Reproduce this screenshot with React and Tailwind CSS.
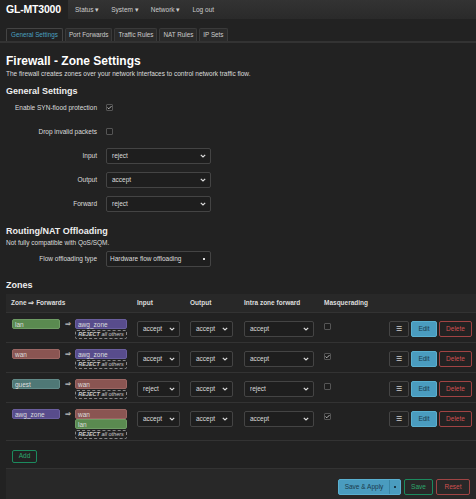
import React from 'react';

const font = { fontFamily: '"Liberation Sans", Arial, sans-serif' };

const zoneColors = {
  lan: 'bg-[#5a8a50] border-[#6e9c64]',
  wan: 'bg-[#8a5552] border-[#9c6764]',
  guest: 'bg-[#4f7876] border-[#628a88]',
  awg_zone: 'bg-[#584c8c] border-[#6a5e9e]',
};

const Chevron = () => (
  <svg width="6" height="4" viewBox="0 0 6 4" className="text-[#ddd]">
    <path d="M0.8 0.8 L3 3 L5.2 0.8" fill="none" stroke="currentColor" strokeWidth="1.2" />
  </svg>
);

function Select({ value, className = '' }) {
  return (
    <div className={`flex h-[16px] items-center justify-between rounded-[2px] border border-[#444] bg-[#1e1e1e] pl-[5px] pr-[4px] text-[6.5px] text-[#ddd] ${className}`}>
      <span>{value}</span>
      <Chevron />
    </div>
  );
}

function Check({ on }) {
  return (
    <div className="flex h-[7px] w-[7px] items-center justify-center rounded-[1px] border border-[#555] bg-[#1e1e1e]">
      {on && (
        <svg width="6" height="5" viewBox="0 0 6 5">
          <path d="M0.6 2.6 L2.2 4 L5.4 0.8" fill="none" stroke="#ddd" strokeWidth="1" />
        </svg>
      )}
    </div>
  );
}

function Badge({ zone, w = 'w-[48px]' }) {
  return (
    <div className={`h-[10px] ${w} rounded-[2px] border px-[2px] text-[6.5px] leading-[9px] text-[#ddd] ${zoneColors[zone]}`}>
      {zone}
    </div>
  );
}

function FormRow({ label, children }) {
  return (
    <div className="flex h-[24px] items-center">
      <div className="w-[91px] text-right text-[6.5px] text-[#ddd]">{label}</div>
      <div className="ml-[9px]">{children}</div>
    </div>
  );
}

const zones = [
  { name: 'lan', fwd: ['awg_zone'], input: 'accept', output: 'accept', intra: 'accept', masq: false, h: 'h-[30px]' },
  { name: 'wan', fwd: ['awg_zone'], input: 'accept', output: 'accept', intra: 'accept', masq: true, h: 'h-[30px]' },
  { name: 'guest', fwd: ['wan'], input: 'reject', output: 'accept', intra: 'reject', masq: false, h: 'h-[30px]' },
  { name: 'awg_zone', fwd: ['wan', 'lan'], input: 'accept', output: 'accept', intra: 'accept', masq: true, h: 'h-[38px]' },
];

export default function App() {
  return (
    <div className="h-[499px] w-[476px] overflow-hidden bg-[#222] text-[#ddd]" style={font}>
      {/* Top bar */}
      <div className="flex h-[19px] bg-gradient-to-b from-[#333] to-[#2a2a2a]">
        <div className="flex w-[68px] items-center whitespace-nowrap bg-[#222] pl-[6px] text-[10.5px] font-bold tracking-[-0.2px] text-white">GL-MT3000</div>
        <div className="flex items-center gap-[12px] pl-[7px] text-[6.5px] text-[#ccc]">
          <span>Status ▾</span>
          <span>System ▾</span>
          <span>Network ▾</span>
          <span>Log out</span>
        </div>
      </div>

      {/* Tabs */}
      <div className="mt-[9px] flex gap-[2px] border-b-[2px] border-[#333] pl-[6px] text-[6.3px]">
        {['General Settings', 'Port Forwards', 'Traffic Rules', 'NAT Rules', 'IP Sets'].map((t, i) => (
          <div
            key={t}
            className={`flex h-[13px] items-center rounded-t-[2px] border border-b-0 px-[3px] ${
              i === 0 ? 'border-[#444] bg-[#222] px-[4px] text-[#4aa0c0]' : 'border-[#3a3a3a] bg-[#2a2a2a] text-[#ccc]'
            }`}
          >
            {t}
          </div>
        ))}
      </div>

      <div className="px-[6px]">
        <h1 className="mt-[11px] text-[12px] font-bold leading-[14px] text-white">Firewall - Zone Settings</h1>
        <p className="mt-[1px] text-[6.5px] text-[#ddd]">The firewall creates zones over your network interfaces to control network traffic flow.</p>

        <h2 className="mt-[7px] text-[9px] font-bold leading-[11px] text-[#eee]">General Settings</h2>
        <div className="mt-[-1px]">
          <FormRow label="Enable SYN-flood protection"><Check on /></FormRow>
          <FormRow label="Drop invalid packets"><Check /></FormRow>
          <FormRow label="Input"><Select value="reject" className="w-[105px]" /></FormRow>
          <FormRow label="Output"><Select value="accept" className="w-[105px]" /></FormRow>
          <FormRow label="Forward"><Select value="reject" className="w-[105px]" /></FormRow>
        </div>

        <h2 className="mt-[10px] text-[9px] font-bold leading-[11px] text-[#eee]">Routing/NAT Offloading</h2>
        <p className="mt-[1px] text-[6.5px] leading-[9px] text-[#ddd]">Not fully compatible with QoS/SQM.</p>
        <FormRow label="Flow offloading type">
          <div className="flex h-[16px] w-[105px] items-center justify-between rounded-[2px] border border-[#444] bg-[#1e1e1e] pl-[3px] pr-[5px] text-[6.5px] text-[#ddd]">
            <span>Hardware flow offloading</span>
            <span className="h-[2px] w-[2px] bg-[#ddd]" />
          </div>
        </FormRow>

        <h2 className="mt-[9px] text-[9px] font-bold leading-[11px] text-[#eee]">Zones</h2>

        {/* Zones table */}
        <div className="mt-[3px] mr-[-6px]">
          <div className="flex h-[19px] items-center border-b border-[#333] bg-[#282828] text-[6.5px] font-bold text-[#ddd]">
            <div className="w-[131px] pl-[5px]">Zone ⇒ Forwards</div>
            <div className="w-[53px]">Input</div>
            <div className="w-[54px]">Output</div>
            <div className="w-[80px]">Intra zone forward</div>
            <div>Masquerading</div>
          </div>
          {zones.map((z) => (
            <div key={z.name} className={`flex items-start border-b border-[#333] pt-[6px] ${z.h}`}>
              <div className="flex w-[131px] pl-[6px]">
                <Badge zone={z.name} />
                <span className="w-[15px] pl-[1px] text-center text-[6.5px] font-bold leading-[9px] text-[#bbb]">⇒</span>
                <div className="flex w-[52px] flex-col">
                  {z.fwd.map((f) => <Badge key={f} zone={f} w="w-[52px]" />)}
                  <div className="mt-[1px] h-[9px] rounded-[2px] border border-dashed border-[#888] text-center text-[5.5px] italic leading-[7px] text-[#ccc]">
                    <span className="font-bold">REJECT</span> all others
                  </div>
                </div>
              </div>
              <div className="mt-[2px] w-[53px]"><Select value={z.input} className="w-[43px]" /></div>
              <div className="mt-[2px] w-[54px]"><Select value={z.output} className="w-[43px]" /></div>
              <div className="mt-[2px] w-[80px]"><Select value={z.intra} className="w-[70px]" /></div>
              <div className="mt-[4px] w-[30px]"><Check on={z.masq} /></div>
              <div className="mt-[2px] ml-auto mr-[4px] flex gap-[2px] text-[6.5px]">
                <div className="flex h-[16px] w-[20px] items-center justify-center rounded-[2px] border border-[#444] bg-[#222] text-[#ccc]">☰</div>
                <div className="flex h-[16px] w-[26px] items-center justify-center rounded-[2px] border border-[#5ab0d0] bg-[#4a9cbf] text-[#1a3a4a]">Edit</div>
                <div className="flex h-[16px] w-[33px] items-center justify-center rounded-[2px] border border-[#a04444] bg-[#222] text-[#d05050]">Delete</div>
              </div>
            </div>
          ))}
          <div className="pl-[6px] pt-[9px] pb-[5px]">
            <div className="flex h-[13px] w-[25px] items-center justify-center rounded-[2px] border border-[#1c8a5e] text-[6.5px] text-[#2ca86e]">Add</div>
          </div>
        </div>
      </div>

      {/* Footer */}
      <div className="ml-[6px] flex h-[40px] items-start justify-end gap-[3px] border-t border-[#333] bg-[#282828] pt-[10px] pr-[6px] text-[6.5px]">
        <div className="flex h-[16px] overflow-hidden rounded-[2px] border border-[#5ab0d0] bg-[#4a9cbf] text-[#1a3a4a]">
          <div className="flex w-[50px] items-center justify-center">Save &amp; Apply</div>
          <div className="flex w-[11px] items-center justify-center border-l border-[#3a86a6]">
            <span className="h-[2px] w-[2px] bg-[#1a3a4a]" />
          </div>
        </div>
        <div className="flex h-[16px] w-[29px] items-center justify-center rounded-[2px] border border-[#1c8a5e] text-[#2ca86e]">Save</div>
        <div className="flex h-[16px] w-[34px] items-center justify-center rounded-[2px] border border-[#a04444] text-[#d05050]">Reset</div>
      </div>
    </div>
  );
}
